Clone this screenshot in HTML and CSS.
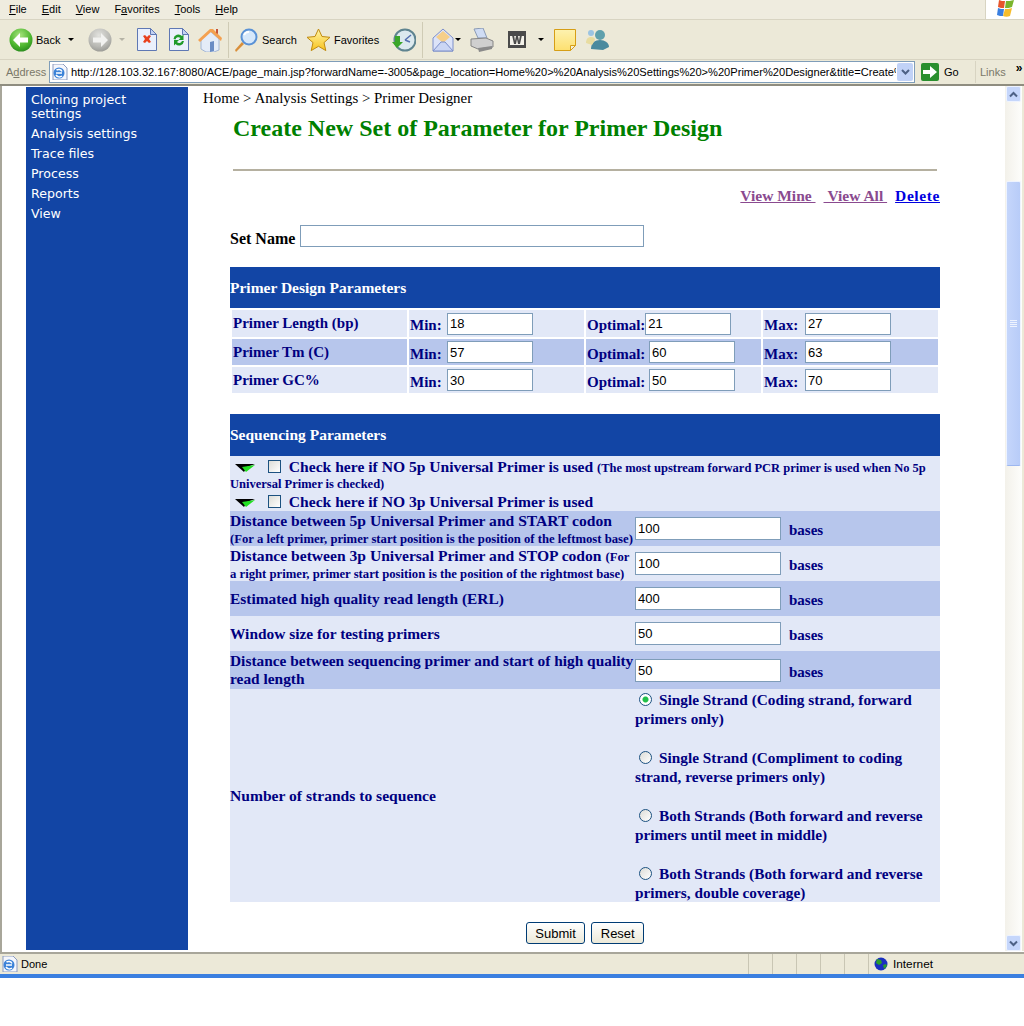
FILE: index.html
```html
<!DOCTYPE html>
<html>
<head>
  <title>Create New Set of Parameter for Primer Design</title>
  <link rel="stylesheet" href="styles.css">
</head>
<body>
<div class="window">
  <!-- browser menu -->
  <div class="menubar">
    <div class="menus">
      <span><u>F</u>ile</span><span><u>E</u>dit</span><span><u>V</u>iew</span><span>F<u>a</u>vorites</span><span><u>T</u>ools</span><span><u>H</u>elp</span>
    </div>
    <div class="winlogo">
      <svg width="20" height="17" viewBox="0 0 20 17"><path d="M4 0c2 1 4 1 6 1l-1 7c-2 0-4 0-6-1z" fill="#e8552a"/><path d="M11 1c2 0 5 0 8-1l-2 7c-2 1-5 1-7 1z" fill="#7ab52c"/><path d="M3 8c2 1 4 1 6 1l-1 7c-2 0-4 0-6-1z" fill="#3a7fe0"/><path d="M10 9c2 0 5 0 7-1l-2 8c-2 1-5 1-7 0z" fill="#f6bd2b"/></svg>
    </div>
  </div>

  <!-- browser toolbar -->
  <div class="toolbar">
    <svg class="i-back" width="24" height="24" viewBox="0 0 24 24"><defs><radialGradient id="gr" cx=".45" cy=".3" r=".8"><stop offset="0" stop-color="#a8e47e"/><stop offset=".6" stop-color="#4cb52e"/><stop offset="1" stop-color="#1f7d1a"/></radialGradient></defs><circle cx="12" cy="12" r="11.500" fill="url(#gr)"/><path d="M4 12l7-7v4.500h8v5h-8V19z" fill="#fff"/></svg>
    <span class="t-back">Back</span>
    <i class="caret c-back"></i>
    <svg class="i-fwd" width="24" height="24" viewBox="0 0 24 24"><defs><radialGradient id="gy" cx=".45" cy=".3" r=".8"><stop offset="0" stop-color="#e2e2de"/><stop offset=".6" stop-color="#b9b9b4"/><stop offset="1" stop-color="#8f8f8a"/></radialGradient></defs><circle cx="12" cy="12" r="11.500" fill="url(#gy)"/><path d="M20 12l-7-7v4.500H5v5h8V19z" fill="#f2f2f0"/></svg>
    <i class="caret off c-fwd"></i>
    <svg class="i-stop" width="20" height="23" viewBox="0 0 20 23"><path d="M.5.5h13l6 6v16H.5z" fill="#eaf0fc" stroke="#5f78b4"/><path d="M13.500.5v6h6z" fill="#c3d2f2" stroke="#5f78b4"/><path d="M6 8l2-1 2 2 2-2 2 1-2 3 2 3-2 1-2-2-2 2-2-1 2-3z" fill="#e8401c"/></svg>
    <svg class="i-refresh" width="20" height="23" viewBox="0 0 20 23"><path d="M.5.5h13l6 6v16H.5z" fill="#eaf0fc" stroke="#5f78b4"/><path d="M13.500.5v6h6z" fill="#c3d2f2" stroke="#5f78b4"/><path d="M4.500 11a5 5 0 0 1 8.500-3l1.500-1.500V12h-5l2-2a3 3 0 0 0-5 1.500z" fill="#1f9a2a"/><path d="M15 13a5 5 0 0 1-8.500 3L5 17.500V12h5l-2 2a3 3 0 0 0 5 -1z" fill="#1f9a2a"/></svg>
    <svg class="i-home" width="24" height="24" viewBox="0 0 24 24"><path d="M3 11l9-8 9 8v11l-5 2H8l-5-3z" fill="#e4ecf8" stroke="#a3b6d4"/><path d="M12 14l4-1v10l-4 1z" fill="#6a8cc4"/><path d="M0 12L12 1l3 0 9 9-1 3L13 4 2 14z" fill="#f4a150"/><path d="M18 1h2v5l-2-1z" fill="#c5553a"/></svg>
    <span class="sep s-one"></span>
    <svg class="i-search" width="24" height="24" viewBox="0 0 24 24"><path d="M1 22l7-8 2 2-8 8z" fill="#d98f3a"/><circle cx="15" cy="9" r="7.500" fill="#d6e8fb" stroke="#5a92d6" stroke-width="2"/><path d="M10 7a5 5 0 0 1 5-3" stroke="#fff" stroke-width="2" fill="none"/></svg>
    <span class="t-search">Search</span>
    <svg class="i-star" width="25" height="24" viewBox="0 0 25 24"><defs><linearGradient id="st" x1="0" y1="0" x2="0" y2="1"><stop offset="0" stop-color="#fff6a8"/><stop offset="1" stop-color="#f8c21c"/></linearGradient></defs><path d="M12.500 1l3.500 7.500 8 .8-6 5.300 1.800 8-7.300-4.300-7.300 4.300 1.800-8-6-5.300 8-.8z" fill="url(#st)" stroke="#c08a10"/></svg>
    <span class="t-fav">Favorites</span>
    <svg class="i-history" width="24" height="24" viewBox="0 0 24 24"><circle cx="13" cy="12" r="10.500" fill="#dce9ef" stroke="#5f8490" stroke-width="2"/><path d="M13 12l6-5M13 12l5 2" stroke="#5570b0" stroke-width="1.500"/><path d="M3 8h5v6h3l-6 6-5-6h3z" fill="#3aa62a"/></svg>
    <span class="sep s-two"></span>
    <svg class="i-mail" width="22" height="24" viewBox="0 0 22 24"><path d="M1 10L11 1l10 9v13H1z" fill="#dce3f8" stroke="#7d8fca"/><path d="M4 9l7-6 7 6-7 6z" fill="#f6cf8a"/><path d="M1 23l8-9h4l8 9z" fill="#cbd6f4" stroke="#7d8fca"/></svg>
    <i class="caret c-mail"></i>
    <svg class="i-print" width="24" height="24" viewBox="0 0 24 24"><path d="M4 1l9-1 4 10H8z" fill="#cfdcf4" stroke="#8b9bb5"/><path d="M1 11l15-1 7 3v6L8 21l-7-3z" fill="#cfcfcf" stroke="#858585"/><path d="M8 20l14-2v3L9 24z" fill="#8a8a8a"/></svg>
    <svg class="i-word" width="18" height="17" viewBox="0 0 18 17"><path d="M0 0h18v17H0z" fill="#4a4a4a"/><path d="M2 5h14v9H2z" fill="#f4f2ea"/><path d="M4 4h2l1 6 1-5h2l1 5 1-6h2l-2 9h-2l-1-5-1 5H6z" fill="#4a4a4a"/></svg>
    <i class="caret c-word"></i>
    <svg class="i-note" width="22" height="22" viewBox="0 0 22 22"><defs><linearGradient id="nt" x1="0" y1="0" x2="0" y2="1"><stop offset="0" stop-color="#fdf2b0"/><stop offset="1" stop-color="#fde070"/></linearGradient></defs><path d="M.5.5h21v16l-5 5H.5z" fill="url(#nt)" stroke="#d69e16"/><path d="M16.500 21.500v-5h5z" fill="#f4efd8" stroke="#d69e16"/></svg>
    <svg class="i-msn" width="24" height="22" viewBox="0 0 24 22"><circle cx="15" cy="6" r="5" fill="#5fa0ac"/><path d="M6 20c0-6 4-9 9-9s9 3 9 7l-6 3z" fill="#4a8a9e"/><circle cx="6" cy="4" r="3" fill="#9cc4e2"/><path d="M1 14c0-4 2-6 5-6s4 1 4 3l-3 5z" fill="#e8dca0"/></svg>
  </div>

  <!-- address bar -->
  <div class="addressbar">
    <span class="addr-label">A<u>d</u>dress</span>
    <div class="addr-box">
      <svg class="ie" width="16" height="16" viewBox="0 0 16 16"><path d="M1 0h10l4 4v12H1z" fill="#f4f6fc" stroke="#8b9bc0"/><circle cx="7" cy="9" r="5.500" fill="#3b82d8"/><path d="M4 9h6M4.500 6a4 4 0 0 1 5.500 1.500M4 11a4 4 0 0 0 6 1" stroke="#fff" stroke-width="1.500" fill="none"/></svg>
      <span class="addr-url">http://128.103.32.167:8080/ACE/page_main.jsp?forwardName=-3005&amp;page_location=Home%20&gt;%20Analysis%20Settings%20&gt;%20Primer%20Designer&amp;title=Create%20New</span>
      <span class="addr-drop"><svg width="9" height="7" viewBox="0 0 9 7"><path d="M1 1l3.500 3.500L8 1" fill="none" stroke="#4d6185" stroke-width="2"/></svg></span>
    </div>
    <div class="go">
      <svg width="18" height="18" viewBox="0 0 18 18"><rect width="18" height="18" rx="2" fill="#2a8f2e"/><path d="M2 7h7V3l7 6-7 6v-4H2z" fill="#fff"/></svg>
      <span>Go</span>
    </div>
    <div class="links"><span>Links</span><b>»</b></div>
  </div>

  <!-- page viewport -->
  <div class="viewport">
    <div class="sidebar">
      <a>Cloning project settings</a>
      <a>Analysis settings</a>
      <a>Trace files</a>
      <a>Process</a>
      <a>Reports</a>
      <a>View</a>
    </div>

    <div class="content">
      <div class="crumb">Home &gt; Analysis Settings &gt; Primer Designer</div>
      <h1>Create New Set of Parameter for Primer Design</h1>
      <hr>
      <div class="actions">
        <a class="seen">View Mine&nbsp;</a>
        <a class="seen">&nbsp;View All&nbsp;</a>
        <a class="fresh">Delete</a>
      </div>
      <div class="setname">
        <label>Set Name</label>
        <input type="text" class="txt name">
      </div>

      <div class="band">Primer Design Parameters</div>
      <div class="primers">
        <div class="pcell lt pl">Primer Length (bp)</div>
        <div class="pcell lt"><span class="k min">Min:</span><input class="txt num" value="18"></div>
        <div class="pcell lt"><span class="k">Optimal:</span><input class="txt num" value="21"></div>
        <div class="pcell lt"><span class="k max">Max:</span><input class="txt num" value="27"></div>

        <div class="pcell dk pl">Primer Tm (C)</div>
        <div class="pcell dk"><span class="k min">Min:</span><input class="txt num" value="57"></div>
        <div class="pcell dk"><span class="k opt">Optimal:</span><input class="txt num" value="60"></div>
        <div class="pcell dk"><span class="k max">Max:</span><input class="txt num" value="63"></div>

        <div class="pcell lt pl">Primer GC%</div>
        <div class="pcell lt"><span class="k min">Min:</span><input class="txt num" value="30"></div>
        <div class="pcell lt"><span class="k opt">Optimal:</span><input class="txt num" value="50"></div>
        <div class="pcell lt"><span class="k max">Max:</span><input class="txt num" value="70"></div>
      </div>

      <div class="band seq">Sequencing Parameters</div>
      <div class="checks lt">
        <div class="chk">
          <svg class="flag" width="20" height="8" viewBox="0 0 20 8"><path d="M0 0h20l-8 3-3 5z" fill="#000"/><path d="M7 3l13-2-9 7z" fill="#22e022"/></svg>
          <span class="box"></span>
          Check here if NO 5p Universal Primer is used <small>(The most upstream forward PCR primer is used when No 5p Universal Primer is checked)</small>
        </div>
        <div class="chk">
          <svg class="flag" width="20" height="8" viewBox="0 0 20 8"><path d="M0 0h20l-8 3-3 5z" fill="#000"/><path d="M7 3l13-2-9 7z" fill="#22e022"/></svg>
          <span class="box"></span>
          Check here if NO 3p Universal Primer is used
        </div>
      </div>
      <div class="row dk r35">
        <div class="lbl long">Distance between 5p Universal Primer and START codon <small>(For a left primer, primer start position is the position of the leftmost base)</small></div>
        <input class="txt wide" value="100"><span class="unit">bases</span>
      </div>
      <div class="row lt r35">
        <div class="lbl long">Distance between 3p Universal Primer and STOP codon <small>(For a right primer, primer start position is the position of the rightmost base)</small></div>
        <input class="txt wide" value="100"><span class="unit">bases</span>
      </div>
      <div class="row dk r35">
        <div class="lbl">Estimated high quality read length (ERL)</div>
        <input class="txt wide" value="400"><span class="unit">bases</span>
      </div>
      <div class="row lt r35">
        <div class="lbl">Window size for testing primers</div>
        <input class="txt wide" value="50"><span class="unit">bases</span>
      </div>
      <div class="row dk r38">
        <div class="lbl">Distance between sequencing primer and start of high quality read length</div>
        <input class="txt wide" value="50"><span class="unit">bases</span>
      </div>
      <div class="row lt strands">
        <div class="lbl long">Number of strands to sequence</div>
        <div class="radios">
          <p><span class="radio on"></span>Single Strand (Coding strand, forward primers only)</p>
          <p><span class="radio"></span>Single Strand (Compliment to coding strand, reverse primers only)</p>
          <p><span class="radio"></span>Both Strands (Both forward and reverse primers until meet in middle)</p>
          <p><span class="radio"></span>Both Strands (Both forward and reverse primers, double coverage)</p>
        </div>
      </div>
      <div class="buttons">
        <button>Submit</button>
        <button>Reset</button>
      </div>
    </div>

    <div class="scrollbar">
      <span class="sb-btn"><svg width="9" height="7" viewBox="0 0 9 7"><path d="M1 5.500l3.500-3.500L8 5.500" fill="none" stroke="#4d6185" stroke-width="2"/></svg></span>
      <div class="sb-track">
        <div class="sb-thumb"><i></i><i></i><i></i><i></i></div>
      </div>
      <span class="sb-btn"><svg width="9" height="7" viewBox="0 0 9 7"><path d="M1 1.500l3.500 3.500L8 1.500" fill="none" stroke="#4d6185" stroke-width="2"/></svg></span>
    </div>
  </div>

  <!-- status bar -->
  <div class="statusbar">
    <svg width="16" height="16" viewBox="0 0 16 16"><path d="M1 0h10l4 4v12H1z" fill="#f4f6fc" stroke="#8b9bc0"/><circle cx="7" cy="9" r="5.500" fill="#3b82d8"/><path d="M4 9h6M4.500 6a4 4 0 0 1 5.500 1.500M4 11a4 4 0 0 0 6 1" stroke="#fff" stroke-width="1.500" fill="none"/></svg>
    <span class="done">Done</span>
    <span class="pane"></span><span class="pane"></span><span class="pane"></span><span class="pane"></span><span class="pane"></span>
    <span class="zone">
      <svg width="14" height="14" viewBox="0 0 14 14"><circle cx="7" cy="7" r="6.500" fill="#1a2fc0"/><path d="M3 2l4 1 1 3-3 2-3-2zM9 8l3-1 1 2-3 3z" fill="#2aa02a"/></svg>
      Internet
    </span>
  </div>
  <div class="taskedge"></div>
</div>
</body>
</html>
```

FILE: styles.css
```css
html, body {
  margin: 0;
  padding: 0;
  background: #fff;
  overflow: hidden;
}
.window {
  width: 1024px;
  height: 1026px;
  display: flex;
  flex-direction: column;
  font-family: "Liberation Sans", Arial, sans-serif;
  font-size: 11px;
  color: #000;
}

/* browser chrome */
.menubar {
  height: 19px;
  background: #efecdf;
  border-bottom: 1px solid #d8d4c2;
  display: flex;
  justify-content: space-between;
}
.menus {
  display: flex;
  gap: 15px;
  padding: 2px 0 0 9px;
  line-height: 14px;
}
.winlogo {
  width: 39px;
  height: 19px;
  background: #fff;
  border-left: 1px solid #d8d4c2;
  box-sizing: border-box;
  padding-left: 9px;
}
.toolbar {
  height: 39px;
  background: #ece9d8;
  border-bottom: 1px solid #d8d4c2;
  display: flex;
  align-items: center;
  padding-left: 9px;
}
.toolbar svg { flex: none; }
.caret {
  display: inline-block;
  width: 0;
  height: 0;
  border-left: 3px solid transparent;
  border-right: 3px solid transparent;
  border-top: 3px solid #000;
  flex: none;
}
.caret.off { border-top-color: #b5b3a6; }
.sep {
  width: 1px;
  height: 36px;
  background: #cfcbb5;
  flex: none;
}
.t-back { margin-left: 3px; width: 24px; }
.c-back { margin-left: 8px; }
.i-fwd { margin-left: 14px; }
.c-fwd { margin-left: 7px; }
.i-stop { margin-left: 12px; }
.i-refresh { margin-left: 12px; }
.i-home { margin-left: 9px; }
.s-one { margin-left: 6px; }
.i-search { margin-left: 5px; }
.t-search { margin-left: 4px; width: 34px; }
.i-star { margin-left: 10px; }
.t-fav { margin-left: 3px; width: 46px; }
.i-history { margin-left: 12px; }
.s-two { margin-left: 6px; }
.i-mail { margin-left: 9px; }
.c-mail { margin-left: 1px; }
.i-print { margin-left: 9px; }
.i-word { margin-left: 14px; }
.c-word { margin-left: 12px; }
.i-note { margin-left: 10px; }
.i-msn { margin-left: 9px; }

.addressbar {
  height: 24px;
  background: #ece9d8;
  border-bottom: 2px solid #8f8d80;
  display: flex;
  align-items: center;
}
.addr-label {
  color: #7a7869;
  width: 49px;
  padding-left: 6px;
  box-sizing: border-box;
  flex: none;
}
.addr-box {
  width: 866px;
  height: 22px;
  background: #fff;
  border: 1px solid #7f9db9;
  box-sizing: border-box;
  display: flex;
  align-items: center;
  overflow: hidden;
  padding-left: 2px;
  flex: none;
}
.ie { flex: none; margin-right: 3px; }
.addr-url {
  white-space: nowrap;
  overflow: hidden;
  flex: 1;
  font-size: 11.100px;
  padding-right: 3px;
}
.addr-drop {
  width: 16px;
  height: 18px;
  margin: 0 1px;
  background: #c1d2f7;
  border-radius: 2px;
  display: flex;
  align-items: center;
  justify-content: center;
  flex: none;
}
.go {
  display: flex;
  align-items: center;
  gap: 5px;
  width: 54px;
  margin-left: 6px;
  flex: none;
}
.links {
  flex: 1;
  color: #7a7869;
  border-left: 1px solid #d8d4c2;
  height: 22px;
  display: flex;
  padding-left: 4px;
  align-items: center;
  gap: 10px;
}
.links b {
  color: #000;
  font-size: 12px;
  margin-top: -8px;
}

/* page area */
.viewport {
  height: 866px;
  display: flex;
  background: #fff;
  border-left: 2px solid #a8a69a;
  box-sizing: border-box;
  padding-top: 1px;
}
.sidebar {
  width: 162px;
  margin: 0 0 2px 24px;
  background: #1245a5;
  box-sizing: border-box;
  padding: 6px 30px 6px 5px;
  flex: none;
}
.sidebar a {
  display: block;
  color: #fff;
  font-family: "DejaVu Sans", Verdana, sans-serif;
  font-size: 12.600px;
  line-height: 14px;
  margin-bottom: 6px;
}
.content {
  width: 752px;
  flex: none;
  padding-left: 42px;
  box-sizing: border-box;
  font-family: "Liberation Serif", "Times New Roman", serif;
}
.crumb {
  font-size: 14.900px;
  line-height: 18px;
  margin-left: -27px;
  margin-top: 2px;
}
h1 {
  margin: 8px 0 0 3px;
  font-size: 24px;
  line-height: 27px;
  color: #008000;
}
hr {
  margin: 27px 3px 0 3px;
  border: 0;
  border-top: 2px solid #b5b0a0;
  height: 0;
}
.actions {
  display: flex;
  justify-content: flex-end;
  gap: 8px;
  margin-top: 16px;
  font-size: 15.500px;
  line-height: 18px;
  font-weight: bold;
}
.actions a { text-decoration: underline; }
.seen { color: #8a4a8f; }
.fresh { color: #0000e0; letter-spacing: .6px; }
.setname {
  display: flex;
  align-items: center;
  gap: 5px;
  margin-top: 20px;
  font-size: 16px;
  font-weight: bold;
  height: 22px;
}
.setname label { padding-top: 5px; }
.txt {
  border: 1px solid #7f9db9;
  background: #fff;
  box-sizing: border-box;
  font-family: "Liberation Sans", Arial, sans-serif;
  font-size: 13px;
  padding: 0 2px;
  margin: 0;
  color: #000;
  border-radius: 0;
  outline: 0;
}
.name { width: 344px; height: 22px; }
.band {
  width: 710px;
  height: 41px;
  margin-top: 20px;
  background: #1245a5;
  color: #fff;
  font-weight: bold;
  font-size: 15.500px;
  display: flex;
  align-items: center;
}
.band.seq { height: 42px; margin-top: 21px; }

.primers {
  margin: 2px 0 0 2px;
  display: grid;
  grid-template-columns: repeat(4, 175px);
  grid-template-rows: 27px 26px 26px;
  gap: 2px;
  color: #000080;
  font-weight: bold;
  font-size: 15px;
}
.pcell {
  display: flex;
  align-items: center;
  white-space: nowrap;
}
.pl { padding-left: 1px; }
.lt { background: #e2e8f7; }
.dk { background: #b7c6ec; }
.k { padding-left: 1px; padding-top: 4px; }
.k.min { width: 37px; }
.k.opt { width: 62px; }
.k.max { width: 41px; }
.num { width: 86px; height: 22px; }

.checks {
  width: 710px;
  height: 55px;
  color: #000080;
  font-weight: bold;
  font-size: 15.600px;
}
.chk { line-height: 15px; padding-top: 3px; }
.chk + .chk { padding-top: 4px; }
.chk small { font-size: 12.500px; line-height: 1; }
.flag { margin-left: 5px; margin-right: 9px; }
.box {
  display: inline-block;
  width: 13px;
  height: 13px;
  box-sizing: border-box;
  border: 1px solid #1c5180;
  background: linear-gradient(135deg, #dcdcd7, #fff);
  margin-right: 4px;
  vertical-align: -1px;
}
.row {
  width: 710px;
  display: flex;
  align-items: center;
  color: #000080;
  font-weight: bold;
  font-size: 15px;
}
.r35 { height: 35px; }
.r38 { height: 38px; }
.lbl {
  width: 405px;
  flex: none;
  line-height: 18px;
  font-size: 15.400px;
}
.lbl.long { font-size: 15.600px; line-height: 17px; }
.lbl small { font-size: 12.700px; line-height: 1; }
.wide { width: 146px; height: 23px; }
.unit { margin-left: 8px; padding-top: 4px; }
.strands { height: 213px; }
.radios {
  width: 305px;
  font-size: 15.300px;
  padding-top: 1px;
}
.radios p {
  margin: 0 0 20px 0;
  line-height: 19px;
}
.radios p:last-child { margin-bottom: 0; }
.radio {
  display: inline-block;
  width: 13px;
  height: 13px;
  box-sizing: border-box;
  border: 1px solid #1c5180;
  border-radius: 50%;
  background: linear-gradient(135deg, #dcdcd7, #fff);
  margin: 0 7px 0 4px;
  vertical-align: -1px;
}
.radio.on { background: radial-gradient(circle, #21c04a 0 2.500px, #fff 3.500px); }
.buttons {
  display: flex;
  justify-content: center;
  gap: 6px;
  width: 710px;
  margin-top: 20px;
}
button {
  height: 22px;
  padding: 0 8.500px;
  font-family: "Liberation Sans", Arial, sans-serif;
  font-size: 13px;
  background: linear-gradient(#fff, #ece9d8);
  border: 1px solid #003c74;
  border-radius: 3px;
  color: #000;
}

/* page scrollbar */
.scrollbar {
  width: 17px;
  margin: -1px 0 1px 65px;
  flex: none;
  display: flex;
  flex-direction: column;
  background: linear-gradient(90deg, #f3f1ea, #fdfdfb);
  border-right: 2px solid #ece9d8;
}
.sb-btn {
  height: 16px;
  margin: 0 1px;
  background: #c5d6fb;
  border: 1px solid #eef3fe;
  border-radius: 2px;
  box-sizing: border-box;
  display: flex;
  align-items: center;
  justify-content: center;
  flex: none;
}
.sb-track { flex: 1; padding-top: 79px; }
.sb-thumb {
  height: 285px;
  margin: 0 1px;
  background: linear-gradient(90deg, #c5d6fb, #b8ccf8);
  border: 1px solid #eef3fe;
  border-bottom-color: #9db7f0;
  border-radius: 2px;
  box-sizing: border-box;
  display: flex;
  flex-direction: column;
  align-items: center;
  justify-content: center;
  gap: 1px;
}
.sb-thumb i {
  width: 7px;
  height: 1px;
  background: #eef3fe;
}

/* status bar */
.statusbar {
  height: 22px;
  background: #ece9d8;
  border-top: 2px solid #a8a69a;
  box-sizing: border-box;
  display: flex;
  align-items: center;
  padding-left: 2px;
}
.done { margin-left: 3px; width: 727px; }
.pane {
  width: 24px;
  height: 20px;
  border-left: 1px solid #c9c6b4;
  box-sizing: border-box;
}
.zone {
  display: flex;
  align-items: center;
  gap: 5px;
  padding-left: 5px;
  height: 20px;
  border-left: 1px solid #c9c6b4;
  font-size: 11.800px;
}
.taskedge { height: 4px; background: #3a7fe0; }
```
